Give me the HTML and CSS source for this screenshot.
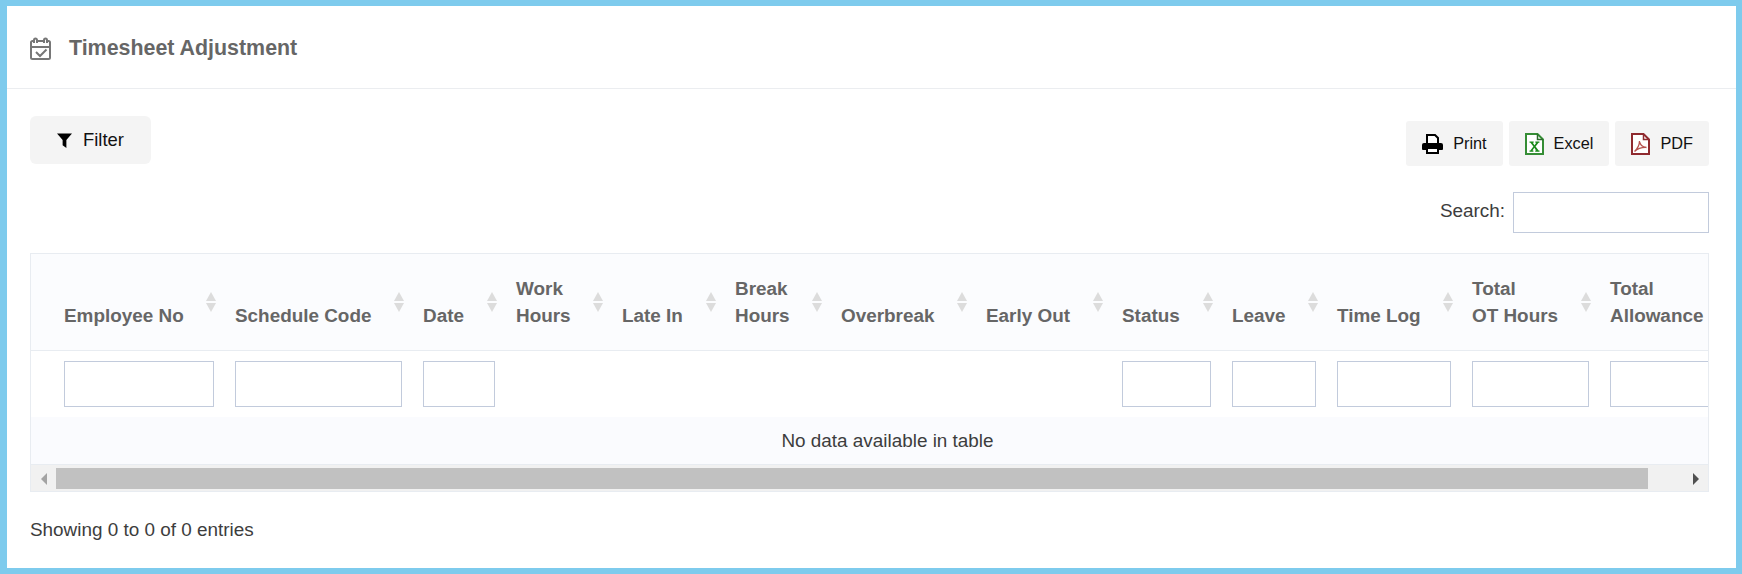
FILE: index.html
```html
<!DOCTYPE html>
<html lang="en">

<head>
    <meta charset="UTF-8">
    <meta name="viewport" content="width=device-width, initial-scale=1.0">
    <title>Timesheet Adjustment</title>
    <link rel="stylesheet" href="styles.css">
</head>

<body>
    <div class="panel">
        <div class="panel-head">
            <svg class="head-icon" viewBox="0 0 21 23" width="21" height="23">
                <path d="M4 4H2.500A1.500 1.500 0 0 0 1 5.500v15A1.500 1.500 0 0 0 2.500 22h16a1.500 1.500 0 0 0 1.500-1.500v-15A1.500 1.500 0 0 0 18.500 4H17M8 4h5" fill="none" stroke="#777" stroke-width="2"/>
                <path d="M1 10h19" stroke="#777" stroke-width="2"/>
                <path d="M4 6V3a1.500 1.500 0 0 1 3 0v3M14 6V3a1.500 1.500 0 0 1 3 0v3" fill="none" stroke="#777" stroke-width="2"/>
                <path d="M6 15l4 4 6.500-6.500" fill="none" stroke="#777" stroke-width="2"/>
            </svg>
            <h1>Timesheet Adjustment</h1>
        </div>
        <div class="panel-body">
            <div class="toolbar">
                <button class="btn btn-filter">
                    <svg viewBox="0 0 16 16" width="15" height="15">
                        <path d="M0 0.500h16L10 7.500V16L6 13V7.500z" fill="#000"/>
                    </svg>
                    Filter
                </button>
                <div class="exports">
                    <button class="btn">
                        <svg viewBox="0 0 21 20" width="21" height="20">
                            <path d="M5 10V1h8l3 3v6z" fill="#fff" stroke="#000" stroke-width="2"/>
                            <path d="M2 9h17a2 2 0 0 1 2 2v4a1 1 0 0 1-1 1H1a1 1 0 0 1-1-1v-4a2 2 0 0 1 2-2z" fill="#000"/>
                            <path d="M5 15v4h11v-4" fill="#fff" stroke="#000" stroke-width="2"/>
                        </svg>
                        Print
                    </button>
                    <button class="btn">
                        <svg viewBox="0 0 19 22" width="19" height="22">
                            <path d="M1 1H12.500L18 6.500V21H1z" fill="#fff" stroke="#358d35" stroke-width="2"/>
                            <path d="M12.500 1V6.500H18" fill="none" stroke="#2c6b2c" stroke-width="1.500"/>
                            <path d="M4.500 8.500h4.200v1.200l-0.900 0.100 1.700 2.500 1.700-2.500-0.900-0.100V8.500h4.100v1.200l-0.900 0.100-2.900 3.700 3 3.900 0.900 0.100v1.200h-4.300v-1.200l0.900-0.100-1.800-2.600-1.800 2.600 0.900 0.100v1.200H4.500v-1.200l0.900-0.100 3-3.900-2.900-3.700-0.900-0.100z" fill="#1a8a1a"/>
                        </svg>
                        Excel
                    </button>
                    <button class="btn">
                        <svg viewBox="0 0 19 22" width="19" height="22">
                            <path d="M1 1H12.500L18 6.500V21H1z" fill="#fff" stroke="#8f2a2f" stroke-width="2"/>
                            <path d="M12.500 1V6.500H18" fill="none" stroke="#8f2a2f" stroke-width="1.500"/>
                            <path d="M3.500 18.500C6 16 8.500 12 8.500 8c0.300 3.500 2.500 6 7 6.500-4-0.200-8.500 0.800-12 4z" fill="none" stroke="#b5534f" stroke-width="1.300"/>
                        </svg>
                        PDF
                    </button>
                </div>
            </div>
            <div class="search-row">
                <label class="search-label" for="search">Search:</label>
                <input id="search" class="field field-search" type="text">
            </div>
            <div class="table-wrap">
                <div class="table-clip">
                    <table class="data-table">
                        <colgroup>
                            <col class="c-emp"><col class="c-sched"><col class="c-date"><col class="c-work">
                            <col class="c-late"><col class="c-break"><col class="c-over"><col class="c-early">
                            <col class="c-status"><col class="c-leave"><col class="c-log"><col class="c-ot">
                            <col class="c-allow">
                        </colgroup>
                        <thead>
                            <tr class="head-row">
                                <th>Employee No<i class="sort"></i></th>
                                <th>Schedule Code<i class="sort"></i></th>
                                <th>Date<i class="sort"></i></th>
                                <th>Work<br>Hours<i class="sort"></i></th>
                                <th>Late In<i class="sort"></i></th>
                                <th>Break<br>Hours<i class="sort"></i></th>
                                <th>Overbreak<i class="sort"></i></th>
                                <th>Early Out<i class="sort"></i></th>
                                <th>Status<i class="sort"></i></th>
                                <th>Leave<i class="sort"></i></th>
                                <th>Time Log<i class="sort"></i></th>
                                <th>Total<br>OT Hours<i class="sort"></i></th>
                                <th>Total<br>Allowance</th>
                            </tr>
                            <tr class="filter-row">
                                <td><input class="field" type="text"></td>
                                <td><input class="field" type="text"></td>
                                <td><input class="field" type="text"></td>
                                <td></td>
                                <td></td>
                                <td></td>
                                <td></td>
                                <td></td>
                                <td><input class="field" type="text"></td>
                                <td><input class="field" type="text"></td>
                                <td><input class="field" type="text"></td>
                                <td><input class="field" type="text"></td>
                                <td><input class="field" type="text"></td>
                            </tr>
                        </thead>
                        <tbody>
                            <tr class="empty-row">
                                <td colspan="13">No data available in table</td>
                            </tr>
                        </tbody>
                    </table>
                </div>
                <div class="scrollbar">
                    <span class="arrow arrow-left"></span>
                    <div class="track"><div class="thumb"></div></div>
                    <span class="arrow arrow-right"></span>
                </div>
            </div>
            <div class="info">Showing 0 to 0 of 0 entries</div>
        </div>
    </div>
</body>

</html>
```

FILE: styles.css
```css
* {
    margin: 0;
    padding: 0;
    box-sizing: border-box;
}

html,
body {
    height: 100%;
}

body {
    font-family: "Liberation Sans", Arial, sans-serif;
    font-size: 18.9px;
    color: #3d3d3d;
    background-color: #fff;
}

.panel {
    height: 574px;
    border: solid #7ecbed;
    border-width: 6px 6px 6px 7px;
    overflow: hidden;
}

.panel-head {
    height: 83px;
    padding: 2px 0 0 23px;
    display: flex;
    align-items: center;
    gap: 18px;
    border-bottom: 1px solid #ebedf0;
}

.panel-head h1 {
    font-size: 21.4px;
    font-weight: bold;
    color: #666;
}

.panel-body {
    padding: 27px 27px 0 23px;
}

.toolbar {
    display: flex;
    justify-content: space-between;
    align-items: flex-start;
}

.btn {
    display: flex;
    align-items: center;
    gap: 10px;
    height: 45px;
    padding: 0 16px;
    border: 0;
    border-radius: 3px;
    background-color: #f4f4f4;
    font-family: inherit;
    font-size: 16.3px;
    color: #111;
}

.btn-filter {
    height: 48px;
    padding: 0 27px;
    gap: 11px;
    border-radius: 6px;
    font-size: 18.4px;
}

.exports {
    display: flex;
    gap: 6px;
    margin-top: 5px;
}

.search-row {
    display: flex;
    justify-content: flex-end;
    align-items: center;
    gap: 8px;
    margin-top: 26px;
}

.search-label {
    padding-bottom: 4px;
}

.field {
    display: block;
    width: 100%;
    height: 46px;
    border: 1px solid #c2cbdc;
    background-color: #fff;
}

.field-search {
    width: 196px;
    height: 41px;
}

.table-wrap {
    margin-top: 20px;
    border: 1px solid #e8ecf1;
}

.table-clip {
    overflow: hidden;
}

.data-table {
    width: 1716px;
    table-layout: fixed;
    border-collapse: collapse;
}

.c-emp { width: 204px; }
.c-sched { width: 188px; }
.c-date { width: 93px; }
.c-work { width: 106px; }
.c-late { width: 113px; }
.c-break { width: 106px; }
.c-over { width: 145px; }
.c-early { width: 136px; }
.c-status { width: 110px; }
.c-leave { width: 105px; }
.c-log { width: 135px; }
.c-ot { width: 138px; }
.c-allow { width: 137px; }

.head-row {
    height: 96px;
    background-color: #fbfcfe;
    border-bottom: 1px solid #e8ecf1;
}

.head-row th {
    position: relative;
    padding: 0 21px 20px 0;
    vertical-align: bottom;
    text-align: left;
    white-space: nowrap;
    line-height: 26.67px;
    font-weight: bold;
    color: #666;
}

.head-row th:first-child,
.filter-row td:first-child {
    padding-left: 33px;
}

.sort {
    position: absolute;
    top: 38px;
    right: 18px;
    width: 11px;
    height: 20px;
}

.sort::before,
.sort::after {
    content: "";
    position: absolute;
    left: 0;
    border-left: 5.500px solid transparent;
    border-right: 5.500px solid transparent;
}

.sort::before {
    top: 0;
    border-bottom: 9.500px solid #dcdcdc;
}

.sort::after {
    bottom: 0;
    border-top: 9.500px solid #dcdcdc;
}

.filter-row td {
    padding: 10px 21px 10px 0;
}

.empty-row td {
    height: 48px;
    padding: 1px 3px 0 0;
    background-color: #fafbfe;
    border-bottom: 1px solid #e8ecf1;
    text-align: center;
}

.scrollbar {
    height: 26px;
    display: flex;
    align-items: flex-start;
    padding-top: 3px;
    background-color: #f1f1f1;
}

.arrow {
    width: 25px;
    height: 21px;
    flex: none;
    display: flex;
    align-items: center;
    justify-content: center;
}

.arrow::before {
    content: "";
    border-top: 6px solid transparent;
    border-bottom: 6px solid transparent;
}

.arrow-left::before {
    border-right: 6px solid #a3a3a3;
}

.arrow-right::before {
    border-left: 6px solid #505050;
}

.track {
    flex: 1;
}

.thumb {
    width: 1592px;
    height: 21px;
    background-color: #c1c1c1;
}

.info {
    margin-top: 27px;
}
```
